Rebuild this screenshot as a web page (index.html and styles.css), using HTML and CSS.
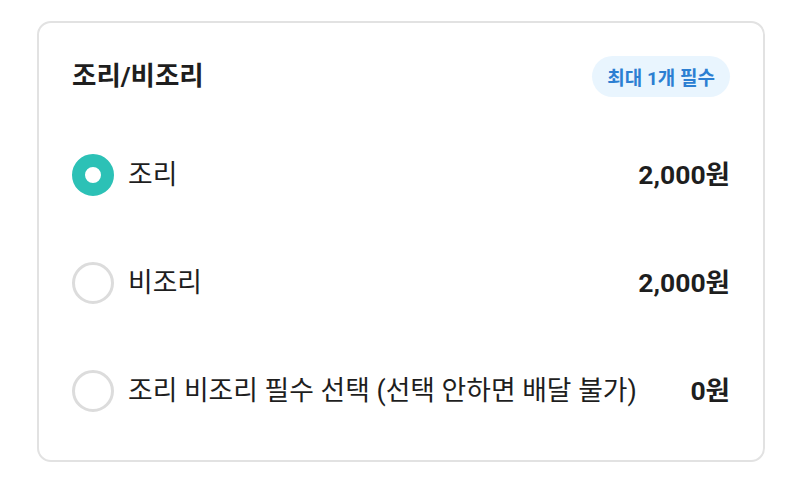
FILE: index.html
```html
<!DOCTYPE html>
<html lang="ko">
<head>
<meta charset="utf-8">
<link rel="stylesheet" href="styles.css">
</head>
<body>
<section class="card">
  <header class="card-header">
    <h2 class="title">조리/비조리</h2>
    <span class="badge">최대 1개 필수</span>
  </header>
  <ul class="options">
    <li class="option">
      <span class="radio radio-on"></span>
      <span class="label">조리</span>
      <span class="price">2,000원</span>
    </li>
    <li class="option">
      <span class="radio"></span>
      <span class="label">비조리</span>
      <span class="price">2,000원</span>
    </li>
    <li class="option">
      <span class="radio"></span>
      <span class="label">조리 비조리 필수 선택 (선택 안하면 배달 불가)</span>
      <span class="price">0원</span>
    </li>
  </ul>
</section>
</body>
</html>
```
FILE: styles.css
```css
* { box-sizing: border-box; }
html, body { margin: 0; padding: 0; background: #ffffff; }
body {
  font-family: Roboto, "Noto Sans CJK KR", sans-serif;
  color: #1e1e1e;
  padding: 21px 35px 0 37px;
}
.card {
  width: 728px;
  height: 441px;
  border: 2px solid #e2e2e2;
  border-radius: 14px;
  padding: 33px 33px 15px 33px;
}
.card-header {
  display: flex;
  align-items: center;
  justify-content: space-between;
  height: 41px;
  margin-bottom: 24px;
}
.title {
  margin: 0;
  font-size: 26.5px;
  font-weight: 700;
  line-height: 1;
}
.badge {
  display: inline-flex;
  align-items: center;
  height: 41px;
  padding: 0 15px;
  border-radius: 21px;
  background: #e9f5fe;
  color: #2c7fd2;
  font-size: 19px;
  font-weight: 700;
}
.options { list-style: none; margin: 0; padding: 0; }
.option {
  display: flex;
  align-items: center;
  height: 108px;
}
.radio {
  width: 42px;
  height: 42px;
  border-radius: 50%;
  border: 3px solid #dcdcdc;
  flex-shrink: 0;
  margin-right: 14px;
}
.radio-on {
  border: 13px solid #2cc1b6;
  background: #ffffff;
}
.label {
  flex: 1;
  font-size: 26.8px;
  line-height: 1;
}
.price {
  font-size: 26.5px;
  font-weight: 700;
  line-height: 1;
}
```
